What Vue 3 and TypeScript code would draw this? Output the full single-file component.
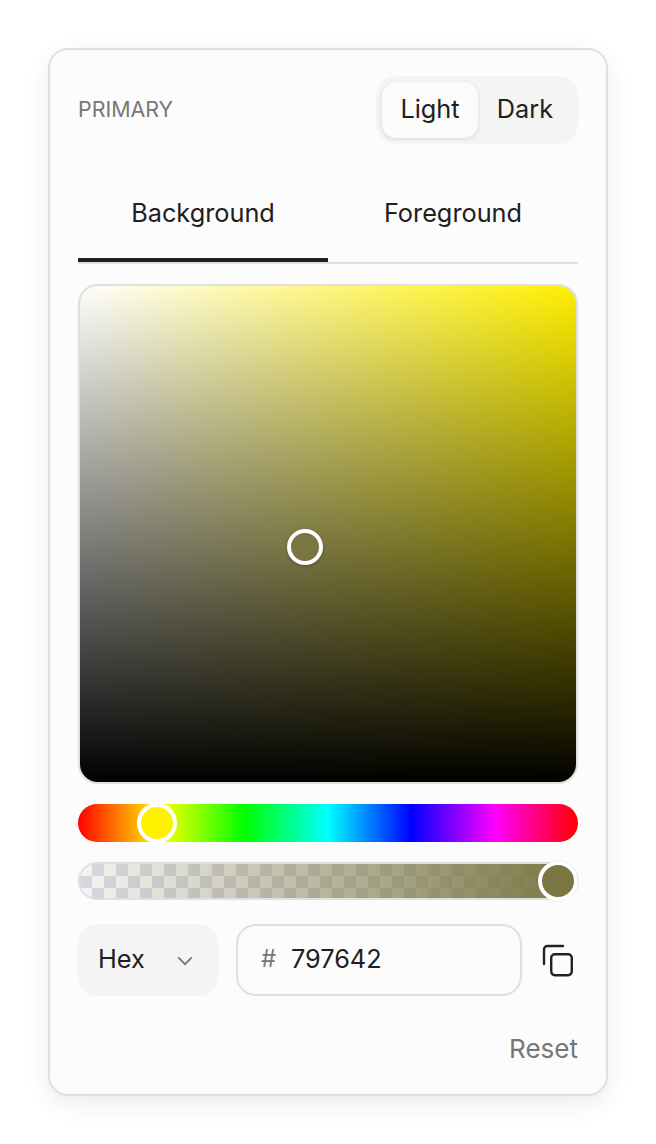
<script setup lang="ts">
const modes: string[] = ['Light', 'Dark']
const tabs: string[] = ['Background', 'Foreground']
const activeMode = 'Light'
const activeTab = 'Background'
const hex = '797642'
</script>

<template>
  <main class="page">
    <section class="card">
      <header class="top">
        <span class="label">PRIMARY</span>
        <div class="segment">
          <button v-for="m in modes" :key="m" class="seg" :class="{ on: m === activeMode }">{{ m }}</button>
        </div>
      </header>

      <nav class="tabs">
        <button v-for="t in tabs" :key="t" class="tab" :class="{ on: t === activeTab }">{{ t }}</button>
      </nav>

      <div class="area">
        <span class="area-thumb"></span>
      </div>

      <div class="hue">
        <span class="hue-thumb"></span>
      </div>

      <div class="alpha">
        <div class="alpha-fill"></div>
        <span class="alpha-thumb"></span>
      </div>

      <div class="row">
        <div class="select">
          <span>Hex</span>
          <svg class="chev" width="16" height="10" viewBox="0 0 16 10" fill="none">
            <path d="M1.2 1.400 8 8.200l6.800-6.800" stroke="#777" stroke-width="1.800" />
          </svg>
        </div>
        <div class="input">
          <span class="hash">#</span>
          <span class="value">{{ hex }}</span>
        </div>
        <svg class="copy" width="32" height="34" viewBox="0 0 32 34" fill="none">
          <path d="M2 20V5.500A3.500 3.500 0 0 1 5.500 2H21" stroke="#222" stroke-width="2.400" stroke-linecap="round" />
          <rect x="9.200" y="10.200" width="20.600" height="21" rx="3.600" stroke="#222" stroke-width="2.400" />
        </svg>
      </div>

      <footer class="foot">
        <button class="reset">Reset</button>
      </footer>
    </section>
  </main>
</template>

<style>
html,
body {
  margin: 0;
  background: #fff;
}
</style>

<style scoped>
.page {
  padding: 48px;
  width: 560px;
  font-family: Inter, "Liberation Sans", sans-serif;
  color: #202020;
}
.card {
  box-sizing: border-box;
  width: 560px;
  height: 1048px;
  padding: 26px 28px 0;
  background: #fcfcfc;
  border: 2px solid #e0e0e0;
  border-radius: 20px;
  box-shadow: 0 8px 24px rgba(0, 0, 0, 0.08);
}
button {
  font: inherit;
  color: inherit;
  background: none;
  border: 0;
  padding: 0;
}
.top {
  display: flex;
  justify-content: space-between;
  align-items: center;
  height: 68px;
}
.label {
  font-size: 21.4px;
  padding-bottom: 2px;
  color: #777;
}
.segment {
  display: flex;
  padding: 6px;
  background: #f4f4f4;
  border-radius: 20px;
}
.seg {
  height: 56px;
  width: 94px;
  padding-bottom: 4px;
  font-size: 25.3px;
  border-radius: 14px;
}
.seg.on {
  width: 96px;
  background: #fbfbfb;
  box-shadow: 0 1px 4px rgba(0, 0, 0, 0.12);
}
.tabs {
  display: flex;
  margin-top: 20px;
  height: 100px;
  box-sizing: border-box;
  border-bottom: 2px solid #e0e0e0;
}
.tab {
  flex: 1;
  font-size: 25.3px;
  height: 98px;
  padding-top: 2px;
  box-sizing: border-box;
  border-bottom: 4px solid transparent;
}
.tab.on {
  border-bottom-color: #202020;
}
.area {
  position: relative;
  box-sizing: border-box;
  margin-top: 20px;
  height: 500px;
  border: 2px solid #e0e0e0;
  border-radius: 20px;
  background:
    linear-gradient(to bottom, transparent, #000),
    linear-gradient(to right, #fff, #fff000);
  background-origin: border-box;
}
.area-thumb {
  position: absolute;
  left: 207px;
  top: 243px;
  box-sizing: border-box;
  width: 36px;
  height: 36px;
  border: 4px solid #fff;
  border-radius: 50%;
  background: #797642;
  box-shadow: 0 1px 3px rgba(0, 0, 0, 0.3);
}
.hue {
  position: relative;
  margin-top: 20px;
  height: 38px;
  border-radius: 19px;
  background: linear-gradient(to right, #f00, #ff0 16.67%, #0f0 33.33%, #0ff 50%, #00f 66.67%, #f0f 83.33%, #f00);
}
.hue-thumb {
  position: absolute;
  left: 59px;
  top: -1px;
  box-sizing: border-box;
  width: 40px;
  height: 40px;
  border: 4px solid #fff;
  border-radius: 50%;
  background: #fff000;
}
.alpha {
  position: relative;
  margin-top: 20px;
  height: 38px;
  border-radius: 19px;
  background-color: #f5f5f5;
  background-image:
    conic-gradient(#d8d8e2 25%, transparent 25%, transparent 50%, #d8d8e2 50%, #d8d8e2 75%, transparent 75%);
  background-size: 24px 24px;
  background-position: 2px 2px;
}
.alpha-fill {
  box-sizing: border-box;
  height: 100%;
  border: 2px solid #e0e0e0;
  border-right: 0;
  border-radius: 19px;
  background: linear-gradient(to right, rgba(121, 118, 66, 0), #797642);
  background-clip: padding-box;
}
.alpha-thumb {
  position: absolute;
  right: 0;
  top: -1px;
  box-sizing: border-box;
  width: 40px;
  height: 40px;
  border: 4px solid #fff;
  border-radius: 50%;
  background: #797642;
  box-shadow: 0 0 0 1px rgba(0, 0, 0, 0.05);
}
.row {
  display: flex;
  align-items: center;
  margin-top: 24px;
  height: 72px;
}
.select {
  box-sizing: border-box;
  width: 140px;
  height: 72px;
  display: flex;
  align-items: center;
  justify-content: space-between;
  padding: 0 25px 4px 20px;
  background: #f4f4f4;
  border-radius: 20px;
  font-size: 25.3px;
}
.chev {
  margin-top: 6px;
}
.input {
  box-sizing: border-box;
  width: 286px;
  height: 72px;
  margin-left: 18px;
  display: flex;
  align-items: center;
  padding: 0 0 4px 23px;
  border: 2px solid #e0e0e0;
  border-radius: 20px;
  font-size: 25.3px;
}
.hash {
  color: #777;
  width: 30px;
  font-size: 24px;
}
.copy {
  margin-left: 20px;
  margin-top: 2px;
}
.foot {
  display: flex;
  justify-content: flex-end;
  margin-top: 37px;
}
.reset {
  font-size: 26px;
  color: #777;
}
</style>
